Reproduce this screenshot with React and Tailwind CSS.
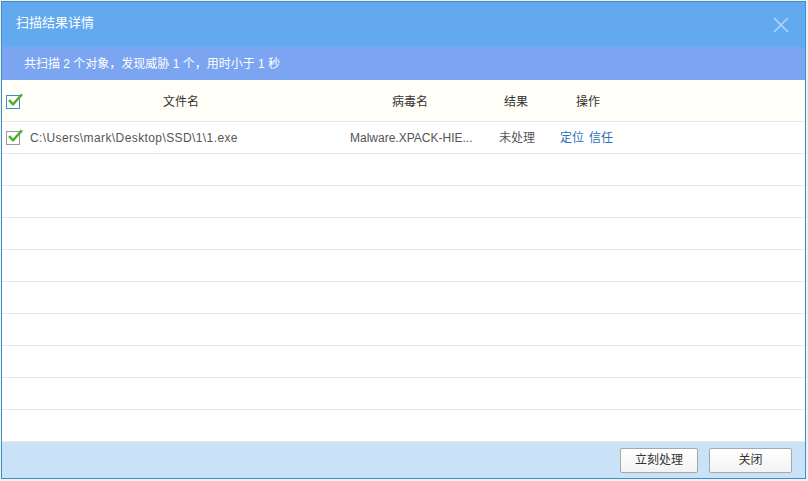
import React from 'react';

const font = { fontFamily: '"Liberation Sans", "Noto Sans CJK SC", sans-serif' };

// green tick inside a small box
const CheckBox = ({ header }) => (
  <span
    className={
      'relative inline-block h-[14px] w-[14px] border bg-white ' +
      (header ? 'border-[#3a8fd0]' : 'border-[#9a9a9a]')
    }
  >
    <svg viewBox="0 0 16 16" className="absolute -top-[3px] left-[0px] h-[15px] w-[16px]">
      <path d="M2.5 8.5 L6 12 L14.5 2.5" fill="none" stroke="#4caf2a" strokeWidth="2.6" strokeLinecap="square" />
    </svg>
  </span>
);

const App = () => {
  const emptyRows = Array.from({ length: 9 });

  return (
    <div className="h-[481px] w-[808px] overflow-hidden bg-[#f2efe6] pl-[1px] pt-[1px]" style={font}>
      <div className="flex h-[478px] w-[805px] flex-col border border-[#3a8fd0] bg-white">
        {/* Title bar */}
        <div className="flex h-[45px] shrink-0 items-center justify-between bg-[#62a9ef] pb-[3px] pl-[14px] pr-[16px]">
          <span className="text-[13px] text-white">扫描结果详情</span>
          <svg viewBox="0 0 16 16" className="mt-[3px] h-[16px] w-[16px]">
            <path d="M1 1 L15 15 M15 1 L1 15" stroke="#b4d5f7" strokeWidth="1.6" />
          </svg>
        </div>

        {/* Summary */}
        <div className="flex h-[33px] shrink-0 items-center bg-[#7ba4f1] pl-[22px] text-[12px] text-white">
          共扫描 2 个对象，发现威胁 1 个，用时小于 1 秒
        </div>

        {/* Table header */}
        <div className="flex h-[42px] shrink-0 items-center border-b border-[#e8e8e8] bg-[#fffef7] pt-[3px] text-[12px] text-[#333]">
          <div className="flex w-[24px] justify-start pl-[4px]">
            <CheckBox header />
          </div>
          <div className="w-[310px] text-center">文件名</div>
          <div className="w-[148px] text-center">病毒名</div>
          <div className="w-[64px] text-center">结果</div>
          <div className="w-[80px] text-center">操作</div>
        </div>

        {/* Rows */}
        <div className="flex h-[32px] shrink-0 items-center border-b border-[#e8e8e8] text-[12px] text-[#555]">
          <div className="flex w-[28px] justify-start pl-[4px]">
            <CheckBox />
          </div>
          <div className="w-[320px] tracking-[0.4px]">C:\Users\mark\Desktop\SSD\1\1.exe</div>
          <div className="w-[149px] truncate">Malware.XPACK-HIE...</div>
          <div className="w-[61px]">未处理</div>
          <div className="flex gap-[5px] text-[#2b6fb8]">
            <span>定位</span>
            <span>信任</span>
          </div>
        </div>
        {emptyRows.map((_, i) => (
          <div key={i} className="h-[32px] shrink-0 border-b border-[#e8e8e8] last:border-b-0" />
        ))}

        {/* Footer */}
        <div className="flex flex-1 items-center justify-end gap-[11px] bg-[#c9e2f8] pr-[13px]">
          <button className="h-[25px] w-[78px] rounded-[2px] border border-[#a8a8a8] bg-gradient-to-b from-white to-[#f3f3f3] text-[12px] text-[#333]">
            立刻处理
          </button>
          <button className="h-[25px] w-[83px] rounded-[2px] border border-[#a8a8a8] bg-gradient-to-b from-white to-[#f3f3f3] text-[12px] text-[#333]">
            关闭
          </button>
        </div>
      </div>
    </div>
  );
};

export default App;
